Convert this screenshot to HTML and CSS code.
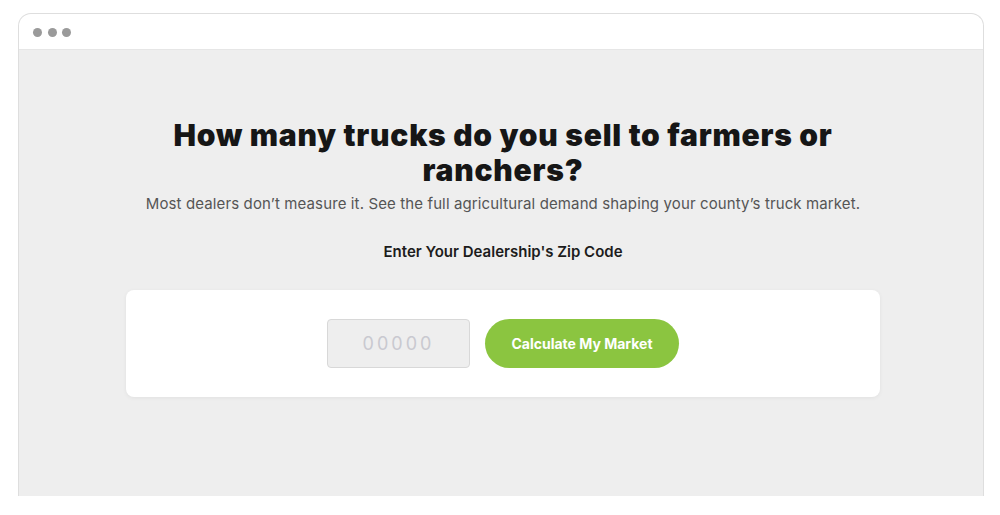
FILE: index.html
```html
<!DOCTYPE html>
<html lang="en">
<head>
<meta charset="utf-8">
<title>Truck Market Calculator</title>
<link rel="stylesheet" href="styles.css">
</head>
<body>
<div class="window">
  <div class="titlebar">
    <span class="dot"></span><span class="dot"></span><span class="dot"></span>
  </div>
  <main class="content">
    <h1 class="title">How many trucks do you sell to farmers or ranchers?</h1>
    <p class="subtitle">Most dealers don’t measure it. See the full agricultural demand shaping your county’s truck market.</p>
    <p class="label">Enter Your Dealership's Zip Code</p>
    <div class="card">
      <input class="zip" type="text" placeholder="00000">
      <button class="cta" type="button">Calculate My Market</button>
    </div>
  </main>
</div>
</body>
</html>
```
FILE: styles.css
```css
* { box-sizing: border-box; }
html, body { margin: 0; padding: 0; background: #ffffff; }
body {
  font-family: Inter, "Open Sans", "Liberation Sans", sans-serif;
  padding: 13px 16px 0 18px;
}
.window {
  width: 966px;
  height: 483px;
  border: 1px solid #dedede;
  border-bottom: none;
  border-radius: 13px 13px 0 0;
  overflow: hidden;
  display: flex;
  flex-direction: column;
  background: #fff;
}
.titlebar {
  height: 36px;
  display: flex;
  align-items: center;
  gap: 5.5px;
  padding-left: 14px;
  padding-top: 1px;
  flex: none;
  border-bottom: 1px solid #e6e6e6;
}
.dot {
  width: 9px;
  height: 9px;
  border-radius: 50%;
  background: #9a9a9a;
}
.content {
  flex: 1;
  background: #eeeeee;
  display: flex;
  flex-direction: column;
  align-items: center;
  padding-top: 68px;
  padding-left: 4px;
}
.title {
  margin: 0;
  font-weight: 900;
  font-size: 30px;
  line-height: 35px;
  color: #161616;
  text-align: center;
  width: 720px;
  letter-spacing: 0.75px;
}
.subtitle {
  margin: 5px 0 0;
  font-size: 15px;
  line-height: 22px;
  color: #555555;
  text-align: center;
  letter-spacing: 0.12px;
}
.label {
  margin: 26px 0 0;
  font-size: 15px;
  line-height: 22px;
  font-weight: 600;
  color: #1c1c1c;
}
.card {
  margin-top: 27px;
  width: 754px;
  height: 107px;
  background: #ffffff;
  border-radius: 8px;
  box-shadow: 0 1px 4px rgba(0,0,0,0.06);
  display: flex;
  align-items: center;
  justify-content: center;
  gap: 15px;
}
.zip {
  width: 143px;
  height: 49px;
  background: #eeeeee;
  border: 1px solid #d8d8d8;
  border-radius: 4px;
  text-align: center;
  font-family: inherit;
  font-size: 18px;
  letter-spacing: 3px;
  color: #333;
  outline: none;
}
.zip::placeholder { color: #c9c9d0; }
.cta {
  width: 194px;
  height: 49px;
  border: none;
  border-radius: 25px;
  background: #8bc540;
  color: #ffffff;
  font-family: inherit;
  font-weight: 700;
  font-size: 14px;
  cursor: pointer;
}
```
